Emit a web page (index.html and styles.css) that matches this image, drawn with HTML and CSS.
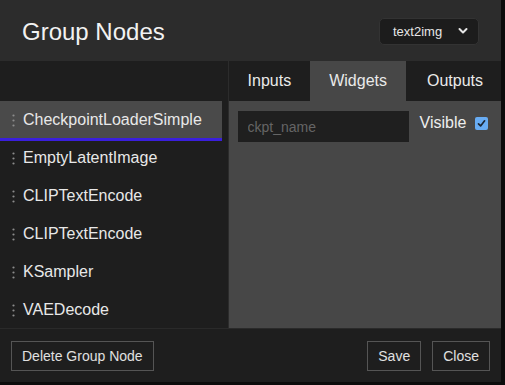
FILE: index.html
```html
<!DOCTYPE html>
<html lang="en">
<head>
    <meta charset="UTF-8">
    <meta name="viewport" content="width=device-width, initial-scale=1.0">
    <title>Group Nodes</title>
    <link rel="stylesheet" href="styles.css">
</head>
<body>
    <div class="dialog">
        <header class="dialog-header">
            <h1>Group Nodes</h1>
            <div class="group-select">
                <span>text2img</span>
                <svg width="10" height="8" viewBox="0 0 10 8">
                    <path d="M1.5 2 L5 5.5 L8.5 2" fill="none" stroke="#e6e6e6" stroke-width="2" stroke-linecap="round" stroke-linejoin="round"/>
                </svg>
            </div>
        </header>

        <div class="dialog-main">
            <ul class="node-list">
                <li class="node-item selected"><span class="drag"><svg width="3" height="13" viewBox="0 0 3 13"><circle cx="1.5" cy="1.5" r="1.1"/><circle cx="1.5" cy="6.5" r="1.1"/><circle cx="1.5" cy="11.5" r="1.1"/></svg></span>CheckpointLoaderSimple</li>
                <li class="node-item"><span class="drag"><svg width="3" height="13" viewBox="0 0 3 13"><circle cx="1.5" cy="1.5" r="1.1"/><circle cx="1.5" cy="6.5" r="1.1"/><circle cx="1.5" cy="11.5" r="1.1"/></svg></span>EmptyLatentImage</li>
                <li class="node-item"><span class="drag"><svg width="3" height="13" viewBox="0 0 3 13"><circle cx="1.5" cy="1.5" r="1.1"/><circle cx="1.5" cy="6.5" r="1.1"/><circle cx="1.5" cy="11.5" r="1.1"/></svg></span>CLIPTextEncode</li>
                <li class="node-item"><span class="drag"><svg width="3" height="13" viewBox="0 0 3 13"><circle cx="1.5" cy="1.5" r="1.1"/><circle cx="1.5" cy="6.5" r="1.1"/><circle cx="1.5" cy="11.5" r="1.1"/></svg></span>CLIPTextEncode</li>
                <li class="node-item"><span class="drag"><svg width="3" height="13" viewBox="0 0 3 13"><circle cx="1.5" cy="1.5" r="1.1"/><circle cx="1.5" cy="6.5" r="1.1"/><circle cx="1.5" cy="11.5" r="1.1"/></svg></span>KSampler</li>
                <li class="node-item"><span class="drag"><svg width="3" height="13" viewBox="0 0 3 13"><circle cx="1.5" cy="1.5" r="1.1"/><circle cx="1.5" cy="6.5" r="1.1"/><circle cx="1.5" cy="11.5" r="1.1"/></svg></span>VAEDecode</li>
            </ul>

            <section class="node-panel">
                <div class="tabs">
                    <div class="tab">Inputs</div>
                    <div class="tab active">Widgets</div>
                    <div class="tab">Outputs</div>
                </div>
                <div class="tab-content">
                    <div class="widget-row">
                        <input class="widget-name" type="text" placeholder="ckpt_name">
                        <label class="visible-toggle">Visible
                            <span class="check">
                                <svg width="9" height="9" viewBox="0 0 9 9"><path d="M1.5 4.8 L3.6 6.9 L7.6 1.8" fill="none" stroke="#1b2633" stroke-width="1.7" stroke-linecap="round" stroke-linejoin="round"/></svg>
                            </span>
                        </label>
                    </div>
                </div>
            </section>
        </div>

        <footer class="dialog-footer">
            <button class="button">Delete Group Node</button>
            <div class="footer-right">
                <button class="button">Save</button>
                <button class="button">Close</button>
            </div>
        </footer>
    </div>
</body>
</html>
```

FILE: styles.css
```css
* {
    margin: 0;
    padding: 0;
    box-sizing: border-box;
    font-family: 'Liberation Sans', Arial, sans-serif;
}

body {
    background: #0c0c0c;
    color: #e0e0e0;
    width: 505px;
    height: 385px;
    overflow: hidden;
}

.dialog {
    width: 501px;
    height: 382px;
    display: flex;
    flex-direction: column;
    background: #1e1e1e;
}

.dialog-header {
    height: 61px;
    padding: 2px 22px 0 22px;
    background: #2c2c2c;
    display: flex;
    align-items: center;
    justify-content: space-between;
}

.dialog-header h1 {
    font-size: 24px;
    font-weight: normal;
    color: #f2f2f2;
}

.group-select {
    width: 100px;
    height: 27px;
    margin-top: -1px;
    background: #1c1c1c;
    border: 1px solid #333;
    border-radius: 5px;
    display: flex;
    align-items: center;
    justify-content: space-between;
    padding: 0 10px 0 13px;
    font-size: 13px;
    color: #e6e6e6;
}

.dialog-main {
    height: 267px;
    display: flex;
}

.node-list {
    list-style: none;
    width: 229px;
    padding: 40px 6px 0 0;
    background: #1e1e1e;
    border-right: 1px solid #2c2c2c;
    overflow: hidden;
}

.node-item {
    height: 38px;
    display: flex;
    align-items: center;
    font-size: 16px;
    color: #e8e8e8;
}

.node-item.selected {
    background: #4a4a4a;
    box-shadow: inset 0 -1px 0 #3a1fdc, 0 2px 0 #3a1fdc;
}

.drag {
    width: 23px;
    padding-left: 12px;
    display: flex;
    align-items: center;
    fill: #8c8c8c;
}

.node-panel {
    flex: 1;
    display: flex;
    flex-direction: column;
}

.tabs {
    height: 40px;
    display: flex;
    background: #1e1e1e;
}

.tab {
    padding: 0 19px;
    display: flex;
    align-items: center;
    font-size: 16px;
    color: #eaeaea;
}

.tab:last-child {
    padding: 0 18px 0 21px;
}

.tab.active {
    background: #474747;
}

.tab-content {
    flex: 1;
    background: #474747;
    padding: 10px 9px;
}

.widget-row {
    display: flex;
    align-items: flex-start;
    gap: 11px;
}

.widget-name {
    width: 171px;
    height: 31px;
    background: #1f1f1f;
    border: none;
    outline: none;
    padding: 0 10px;
    font-size: 14px;
    color: #ddd;
}

.widget-name::placeholder {
    color: #656565;
}

.visible-toggle {
    margin-top: 3px;
    height: 18px;
    display: flex;
    align-items: center;
    font-size: 16px;
    color: #eee;
}

.check {
    width: 13px;
    height: 13px;
    margin-left: 9px;
    border-radius: 2px;
    background: #68acf3;
    display: flex;
    align-items: center;
    justify-content: center;
}

.dialog-footer {
    flex: 1;
    border-top: 1px solid #2a2a2a;
    padding: 0 11px;
    display: flex;
    align-items: center;
    justify-content: space-between;
}

.footer-right {
    display: flex;
    gap: 11px;
}

.button {
    height: 30px;
    padding: 0 10px;
    background: #1e1e1e;
    border: 1px solid #555;
    color: #e0e0e0;
    font-size: 14px;
}
```
